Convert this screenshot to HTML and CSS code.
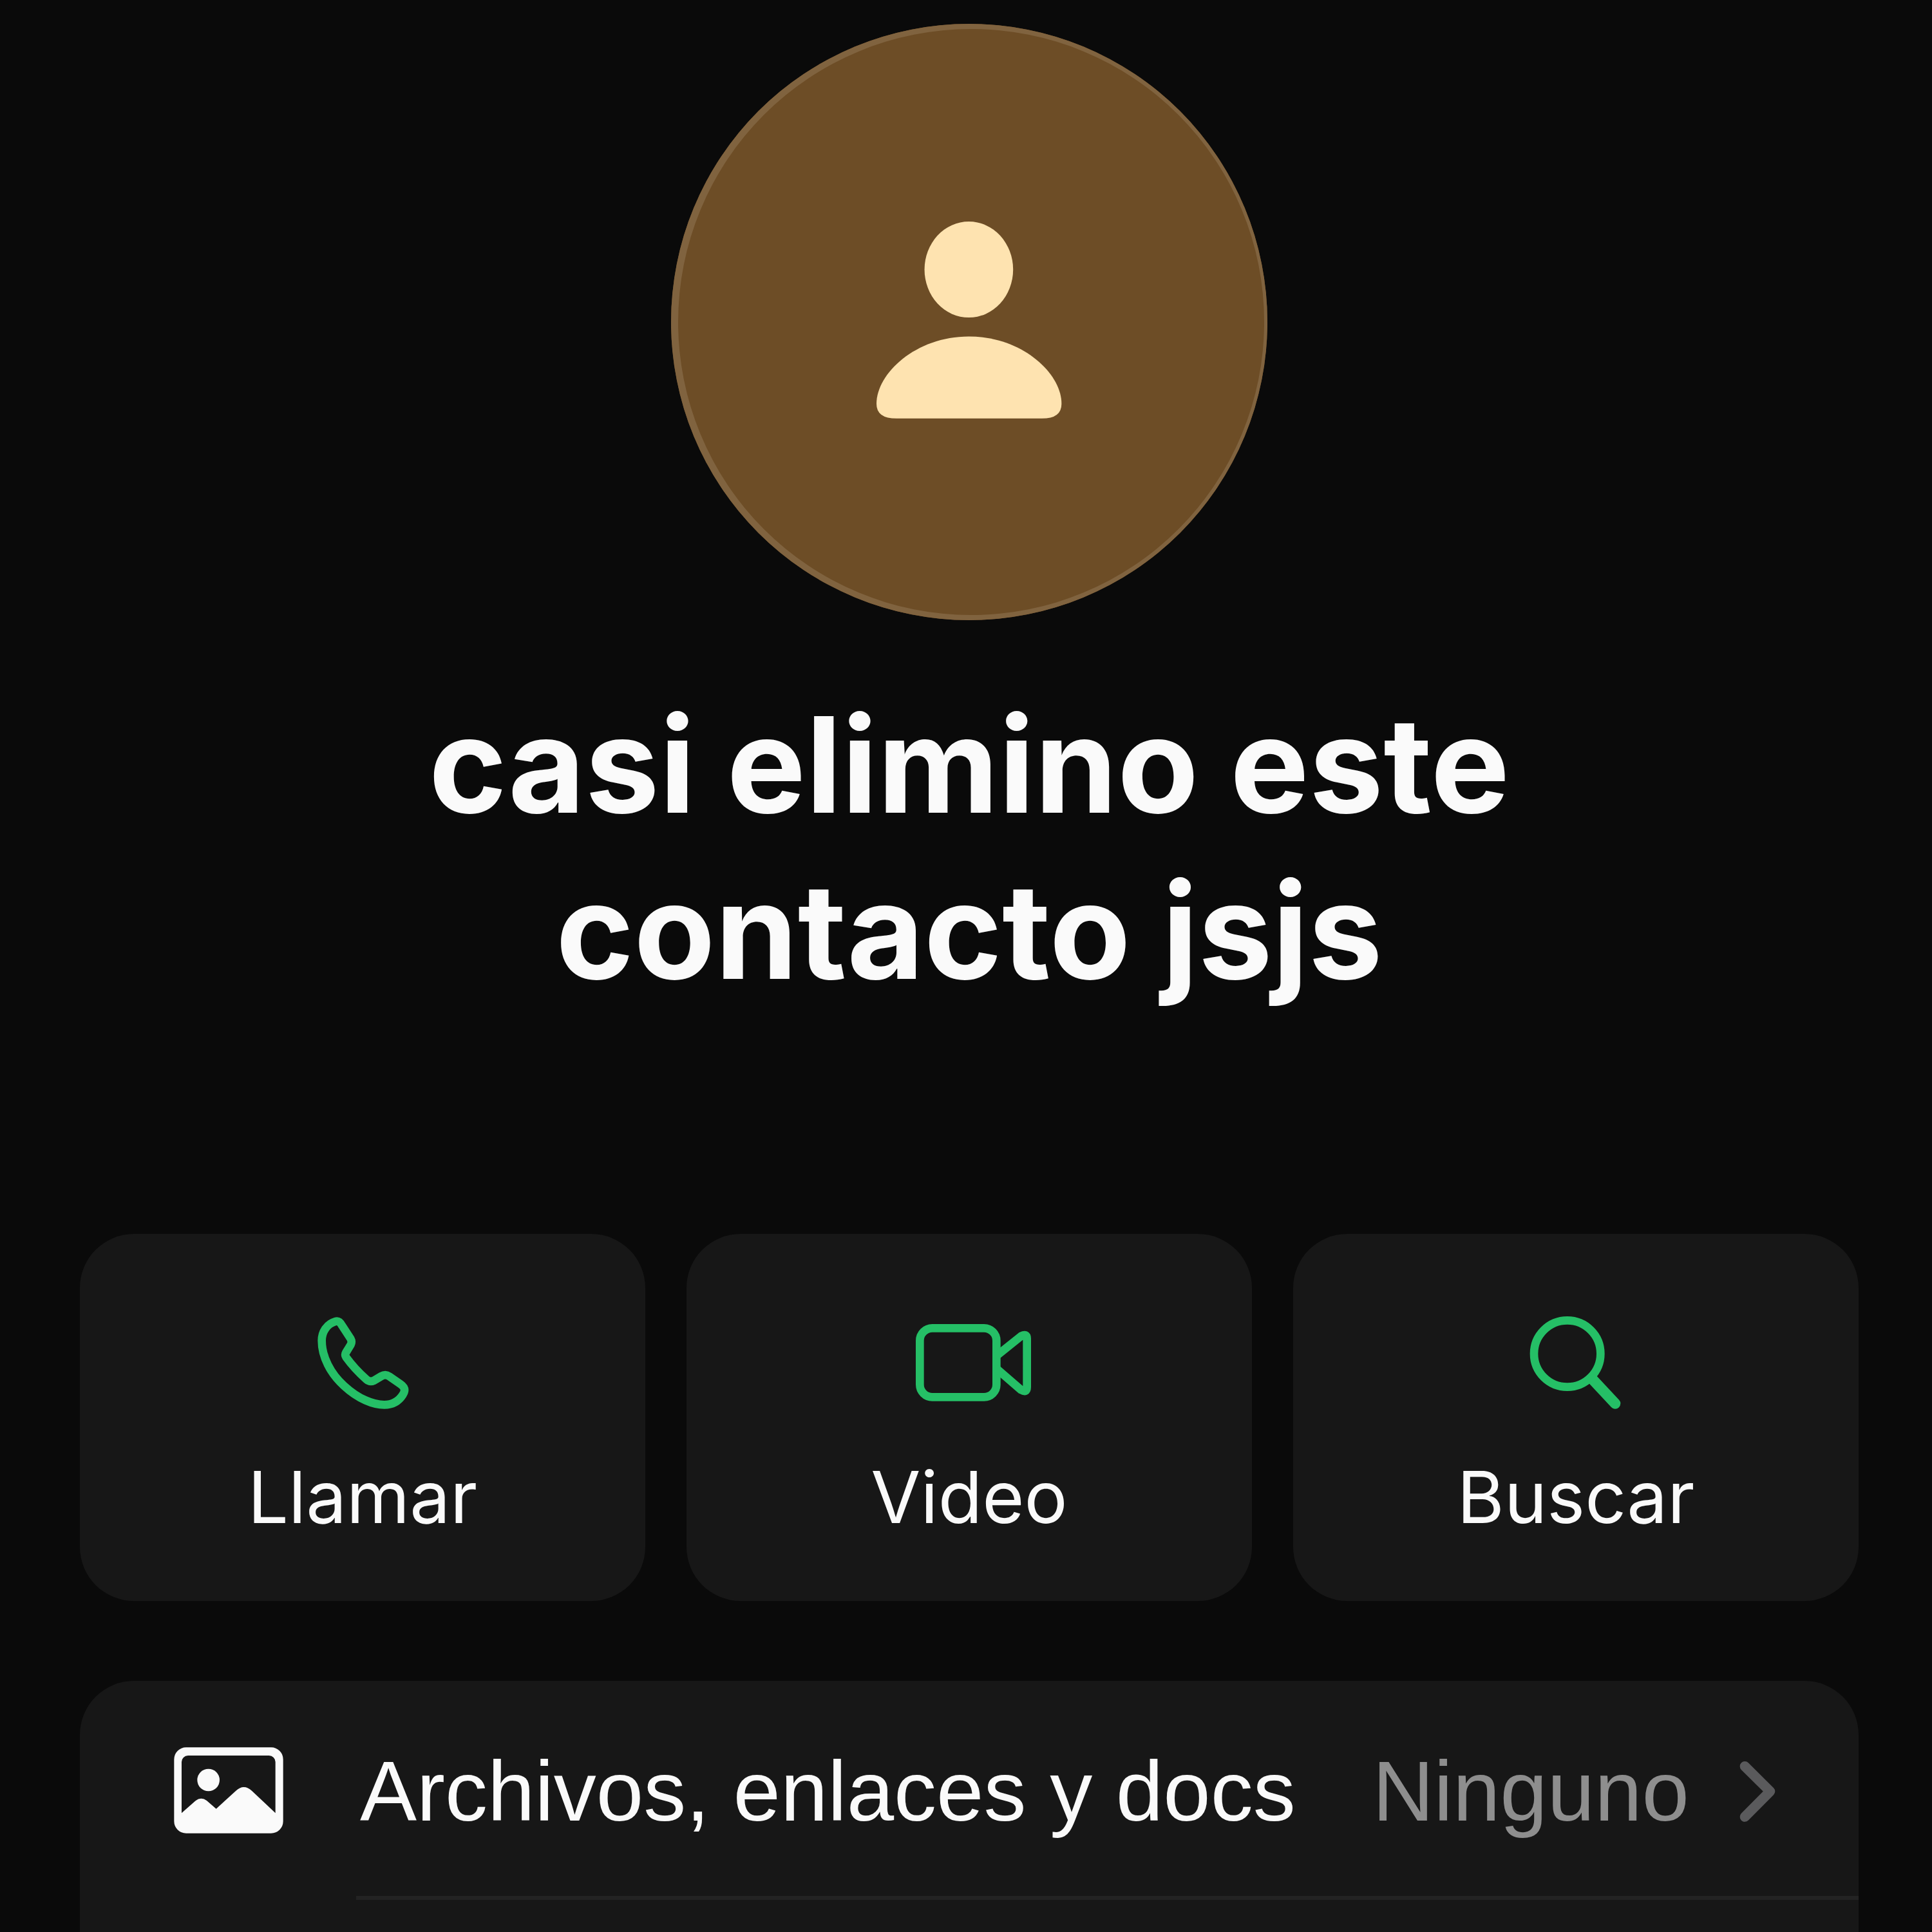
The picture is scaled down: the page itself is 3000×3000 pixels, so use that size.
FILE: index.html
```html
<!DOCTYPE html>
<html lang="es">
<head>
    <meta charset="UTF-8">
    <meta name="viewport" content="width=device-width, initial-scale=1.0">
    <title>Info. del contacto</title>
    <link rel="stylesheet" href="styles.css">
</head>
<body>

<main class="contact">

    <!-- Profile -->
    <div class="avatar">
        <svg class="avatar-icon" viewBox="567 538 452 481" aria-hidden="true">
            <ellipse cx="792" cy="655" rx="108" ry="117"/>
            <path d="M792 818C922 818 1018 908 1018 982Q1018 1018 970 1018H616Q567 1018 567 982C567 908 663 818 792 818Z"/>
        </svg>
    </div>

    <h1>casi elimino este contacto jsjs</h1>

    <!-- Actions -->
    <div class="actions">
        <button type="button">
            <svg class="action-icon" viewBox="51 60 576 576" aria-hidden="true">
                <path d="M212 156C172 168 149 205 149 245C149 320 190 400 252 455C320 518 390 544 440 544C480 544 508 526 526 498C540 476 536 462 516 448L464 412Q446 399 426 411L392 431Q373 440 357 426Q300 375 262 322Q255 312 262 300L284 264Q291 250 283 236L244 176Q230 150 212 156Z"/>
            </svg>
            <span>Llamar</span>
        </button>
        <button type="button">
            <svg class="action-icon" viewBox="58 0 576 576" aria-hidden="true">
                <rect x="116" y="127" width="357" height="321" rx="58"/>
                <path d="M478 252L588 164Q615 150 615 176V402Q615 430 588 415L478 320"/>
            </svg>
            <span>Video</span>
        </button>
        <button type="button">
            <svg class="action-icon" viewBox="36 30 576 576" aria-hidden="true">
                <circle cx="284" cy="276" r="155"/>
                <path class="handle" d="M404 398L507 508"/>
            </svg>
            <span>Buscar</span>
        </button>
    </div>

    <!-- Options -->
    <nav class="options">
        <a class="option" href="#archivos">
            <svg class="option-icon" viewBox="89 99 510 402" aria-hidden="true">
                <path fill-rule="evenodd" d="M146 100H542A56 56 0 0 1 598 156V444A56 56 0 0 1 542 500H146A56 56 0 0 1 90 444V156A56 56 0 0 1 146 100ZM155 138A30 30 0 0 0 125 168V406L188 350Q215 328 242 348L286 386L378 302Q415 268 452 302L562 406V168A30 30 0 0 0 532 138Z"/>
                <circle cx="250" cy="252" r="52"/>
            </svg>
            <span class="option-body">
                <span class="option-name">Archivos, enlaces y docs</span>
                <span class="option-value">Ninguno</span>
                <svg class="chevron" viewBox="188 160 170 280" aria-hidden="true">
                    <path d="M213 183L330 299L213 417"/>
                </svg>
            </span>
        </a>
    </nav>

</main>

</body>
</html>
```
FILE: styles.css
```css
* {
    box-sizing: border-box;
}
body {
    margin: 0;
    background-color: #0a0a0a;
    color: #fafafa;
    font-family: Inter, "Liberation Sans", sans-serif;
}
.contact {
    display: flex;
    flex-direction: column;
    align-items: center;
    min-height: 100vh;
    padding: 37px 114px 0 124px;
}

.avatar {
    display: flex;
    align-items: center;
    justify-content: center;
    width: 926px;
    height: 926px;
    padding-bottom: 6px;
    border-radius: 50%;
    background-color: #6d4d26;
    box-shadow: inset 3px 0 0 8px #80633f;
}
.avatar-icon {
    width: 288px;
    fill: #fee3b0;
}

h1 {
    max-width: 66%;
    margin: 95px 0 342px;
    font-size: 206px;
    font-weight: 700;
    line-height: 258px;
    text-align: center;
}

.actions {
    display: grid;
    grid-template-columns: repeat(3, 1fr);
    gap: 64px;
    width: 100%;
    margin-bottom: 124px;
}
.actions button {
    display: flex;
    flex-direction: column;
    align-items: center;
    gap: 44px;
    padding: 104px 0 94px;
    border: none;
    border-radius: 84px;
    background-color: #171717;
    color: inherit;
    font-family: inherit;
    font-size: 112px;
    line-height: 136px;
    cursor: pointer;
}
.action-icon {
    width: 192px;
    height: 192px;
    fill: none;
    stroke: #25bf66;
    stroke-width: 38;
    stroke-linecap: round;
    stroke-linejoin: round;
}
.handle {
    stroke-width: 50;
}

.options {
    flex: 1;
    width: 100%;
    border-radius: 84px 84px 0 0;
    background-color: #171717;
}
.option {
    display: flex;
    align-items: center;
    gap: 113px;
    padding-left: 146px;
    color: inherit;
    font-family: "Liberation Sans", Arial, sans-serif;
    font-size: 132px;
    line-height: 160px;
    text-decoration: none;
}
.option-icon {
    width: 170px;
    fill: #fafafa;
}
.option-body {
    flex: 1;
    display: flex;
    align-items: center;
    padding: 92px 128px 82px 6px;
    border-bottom: 6px solid #232323;
}
.option-value {
    margin-left: auto;
    color: #8e8e8e;
}
.chevron {
    width: 57px;
    margin-left: 78px;
    fill: none;
    stroke: #5a5a5c;
    stroke-width: 46;
    stroke-linecap: round;
    stroke-linejoin: round;
}
```
